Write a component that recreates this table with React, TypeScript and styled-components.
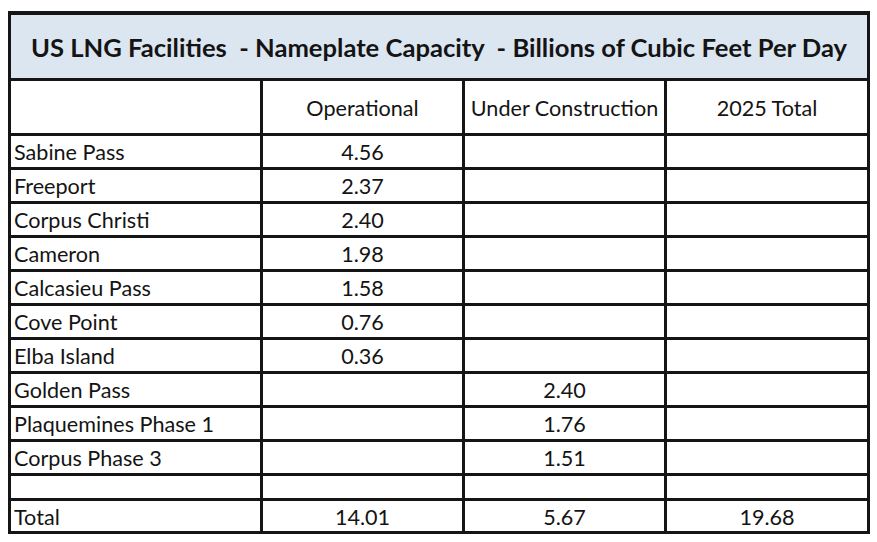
import React from "react";
import styled, { createGlobalStyle } from "styled-components";

const Global = createGlobalStyle`
  html, body { margin: 0; padding: 0; background: #ffffff; }
  body { font-family: Lato, "Open Sans", sans-serif; color: #111111; }
`;

const Page = styled.div`
  width: 877px;
  height: 542px;
  padding: 11px 0 0 8px;
  box-sizing: border-box;
  background: #fff;
`;

const Sheet = styled.div`
  width: 862px;
  box-sizing: border-box;
  border: 3px solid #151515;
  border-top-width: 4px;
`;

const Title = styled.div`
  height: 63px;
  background: #dce6f1;
  border-bottom: 3px solid #151515;
  display: flex;
  align-items: center;
  justify-content: center;
  font-weight: 700;
  font-size: 25.6px;
  white-space: pre;
  color: #141414;
`;

const Grid = styled.div`
  display: grid;
  grid-template-columns: 249px 199px 199px 200px;
  grid-template-rows: 52px repeat(10, 31px) 22px 30px;
  gap: 3px;
  background: #151515;
`;

const Cell = styled.div<{ $align?: "left" | "center" }>`
  background: #fff;
  display: flex;
  align-items: center;
  justify-content: ${(p) => (p.$align === "left" ? "flex-start" : "center")};
  padding: ${(p) => (p.$align === "left" ? "1px 0 0 3px" : "1px 0 0 0")};
  font-size: 21.6px;
  white-space: pre;
  overflow: hidden;
  color: #141414;
`;

type Row = [string, string, string, string];

const rows: Row[] = [
  ["", "Operational", "Under Construction", "2025 Total"],
  ["Sabine Pass", "4.56", "", ""],
  ["Freeport", "2.37", "", ""],
  ["Corpus Christi", "2.40", "", ""],
  ["Cameron", "1.98", "", ""],
  ["Calcasieu Pass", "1.58", "", ""],
  ["Cove Point", "0.76", "", ""],
  ["Elba Island", "0.36", "", ""],
  ["Golden Pass", "", "2.40", ""],
  ["Plaquemines Phase 1", "", "1.76", ""],
  ["Corpus Phase 3", "", "1.51", ""],
  ["", "", "", ""],
  ["Total", "14.01", "5.67", "19.68"],
];

export default function App() {
  return (
    <Page>
      <Global />
      <Sheet>
        <Title>US LNG Facilities  - Nameplate Capacity  - Billions of Cubic Feet Per Day</Title>
        <Grid>
          {rows.map((r, i) =>
            r.map((c, j) => (
              <Cell key={`${i}-${j}`} $align={j === 0 ? "left" : "center"}>
                {c}
              </Cell>
            ))
          )}
        </Grid>
      </Sheet>
    </Page>
  );
}
